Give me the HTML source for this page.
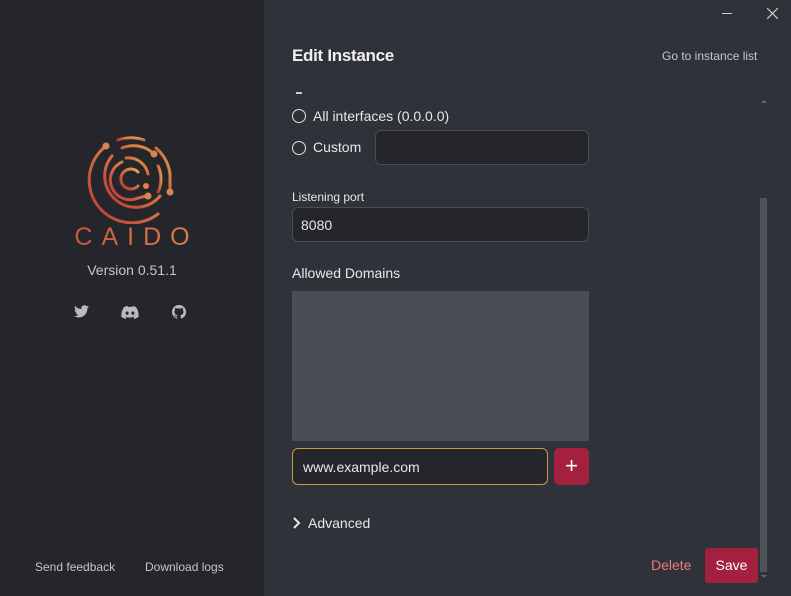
<!DOCTYPE html>
<html><head><style>
*{box-sizing:border-box;margin:0;padding:0}
body{width:791px;height:596px;overflow:hidden;background:#30323a;font-family:"Liberation Sans",sans-serif;position:relative;color:#e8e8ea}
.side{position:absolute;left:0;top:0;width:264px;height:596px;background:#25262b}
.abs{position:absolute}
.input{position:absolute;background:#25262c;border:1px solid #4a4c54;border-radius:6px}
.radio{position:absolute;width:14px;height:14px;border:1.5px solid #e0e0e0;border-radius:50%}
</style></head><body>
<div class="side">
<svg class="abs" style="left:82px;top:134px" width="96" height="90" viewBox="0 0 96 90">
<defs><linearGradient id="g" x1="0" y1="1" x2="1" y2="0"><stop offset="0" stop-color="#b8353a"/><stop offset="1" stop-color="#e8a24a"/></linearGradient></defs>
<g fill="none" stroke="url(#g)" stroke-width="3" stroke-linecap="round">
<path d="M24 12 A42 42 0 1 0 76 80"/>
<path d="M36 6 A42 42 0 0 1 62 6"/>
<path d="M74 14 A42 42 0 0 1 88 40 L88 56"/>
<path d="M30 22 A30 30 0 1 0 78 62"/>
<path d="M40 14 A30 30 0 0 1 72 20"/>
<path d="M76 32 A30 30 0 0 1 76 58"/>
<path d="M40 28 A19 19 0 1 0 56 64 L64 62"/>
<path d="M44 24 A20 20 0 0 1 66 40"/>
<path d="M56 38 A10 10 0 1 0 56 52"/>
<path d="M54 52 L62 52"/>
</g>
<g fill="#e0834a"><circle cx="24" cy="12" r="3.5"/><circle cx="72" cy="20" r="3.5"/><circle cx="88" cy="58" r="3.5"/><circle cx="66" cy="62" r="3.5"/><circle cx="64" cy="52" r="3"/></g>
</svg>
<div class="abs" style="left:0;width:264px;top:223px;text-align:center;font-size:25px;letter-spacing:9px;padding-left:9px;background:linear-gradient(90deg,#c0393c,#e09a4c);-webkit-background-clip:text;background-clip:text;-webkit-text-fill-color:transparent">CAIDO</div>
<div class="abs" style="left:0;width:264px;top:262px;text-align:center;font-size:14px;color:#c4c6cc">Version 0.51.1</div>
<svg class="abs" style="left:74px;top:305px" width="15" height="13" viewBox="0 0 24 20"><path fill="#b8bac0" d="M24 2.3a10 10 0 0 1-2.8.8A5 5 0 0 0 23.3.4a10 10 0 0 1-3.1 1.2A4.9 4.9 0 0 0 11.8 6 14 14 0 0 1 1.7.9a4.9 4.9 0 0 0 1.5 6.6A4.9 4.9 0 0 1 1 6.9a4.9 4.9 0 0 0 3.9 4.8 5 5 0 0 1-2.2.1 4.9 4.9 0 0 0 4.6 3.4A9.9 9.9 0 0 1 0 17.3 14 14 0 0 0 7.5 19.5c9 0 14-7.5 14-14v-.6A10 10 0 0 0 24 2.3z"/></svg>
<svg class="abs" style="left:121px;top:306px" width="18" height="13" viewBox="0 0 24 18"><path fill="#b8bac0" d="M20.3 1.5A19.8 19.8 0 0 0 15.4 0l-.6 1.3a18 18 0 0 0-5.5 0L8.6 0A19.7 19.7 0 0 0 3.7 1.5C.6 6.1-.3 10.6.1 15a20 20 0 0 0 6 3l1.3-2a13 13 0 0 1-2-1l.5-.4a14 14 0 0 0 12.2 0l.5.4a13 13 0 0 1-2 1l1.3 2a20 20 0 0 0 6-3c.5-5.1-.8-9.6-3.6-13.5zM8 12.3c-1.2 0-2.2-1.1-2.2-2.4S6.8 7.5 8 7.5s2.2 1.1 2.2 2.4-1 2.4-2.2 2.4zm8 0c-1.2 0-2.2-1.1-2.2-2.4s1-2.4 2.2-2.4 2.2 1.1 2.2 2.4-1 2.4-2.2 2.4z"/></svg>
<svg class="abs" style="left:172px;top:305px" width="14" height="14" viewBox="0 0 24 24"><path fill="#b8bac0" d="M12 0a12 12 0 0 0-3.8 23.4c.6.1.8-.3.8-.6v-2c-3.3.7-4-1.6-4-1.6-.6-1.4-1.4-1.8-1.4-1.8-1-.7.1-.7.1-.7 1.2.1 1.8 1.2 1.8 1.2 1 1.8 2.8 1.3 3.5 1 .1-.8.4-1.3.7-1.6-2.7-.3-5.5-1.3-5.5-6 0-1.2.5-2.3 1.3-3.1-.2-.4-.6-1.6.1-3.2 0 0 1-.3 3.3 1.2a11.5 11.5 0 0 1 6 0C17.3 4.7 18.3 5 18.3 5c.7 1.6.2 2.8.1 3.2.8.8 1.3 1.9 1.3 3.2 0 4.6-2.8 5.6-5.5 5.9.5.4.8 1.1.8 2.2v3.3c0 .3.2.7.8.6A12 12 0 0 0 12 0z"/></svg>
<div class="abs" style="left:35px;top:560px;font-size:12px;color:#c4c6cc">Send feedback</div>
<div class="abs" style="left:145px;top:560px;font-size:12px;color:#c4c6cc">Download logs</div>
</div>
<div class="abs" style="left:722px;top:13px;width:10px;height:1px;background:#ccc"></div>
<svg class="abs" style="left:767px;top:8px" width="11" height="11" viewBox="0 0 11 11"><path d="M0 0L11 11M11 0L0 11" stroke="#ccc" stroke-width="1.2"/></svg>
<div class="abs" style="left:292px;top:46px;font-size:17px;font-weight:bold;color:#f0f0f2;letter-spacing:-0.3px">Edit Instance</div>
<div class="abs" style="left:662px;top:49px;font-size:12px;color:#c4c6cc">Go to instance list</div>
<div class="abs" style="left:296px;top:92px;width:6px;height:1.5px;background:#ccc"></div>
<div class="abs" style="left:761px;top:100px;width:0;height:0;border-left:3px solid transparent;border-right:3px solid transparent;border-bottom:3px solid #666"></div>
<div class="radio" style="left:292px;top:109px"></div>
<div class="abs" style="left:313px;top:108px;font-size:14px">All interfaces (0.0.0.0)</div>
<div class="radio" style="left:292px;top:141px"></div>
<div class="abs" style="left:313px;top:139px;font-size:14px">Custom</div>
<div class="input" style="left:375px;top:130px;width:214px;height:35px"></div>
<div class="abs" style="left:292px;top:190px;font-size:12px">Listening port</div>
<div class="input" style="left:292px;top:207px;width:297px;height:35px;font-size:14px;padding:9px 8px">8080</div>
<div class="abs" style="left:292px;top:265px;font-size:14px">Allowed Domains</div>
<div class="abs" style="left:292px;top:291px;width:297px;height:150px;background:#4a4c56"></div>
<div class="input" style="left:292px;top:448px;width:256px;height:37px;border-color:#c99a4a;font-size:14px;padding:10px 10px">www.example.com</div>
<div class="abs" style="left:554px;top:448px;width:35px;height:37px;background:#a3203e;border-radius:5px;color:#fff;font-size:22px;text-align:center;line-height:35px">+</div>
<svg class="abs" style="left:292px;top:517px" width="10" height="12" viewBox="0 0 10 12"><path d="M2 1L7 6L2 11" stroke="#e8e8ea" stroke-width="2" fill="none"/></svg>
<div class="abs" style="left:308px;top:515px;font-size:14px">Advanced</div>
<div class="abs" style="left:651px;top:557px;font-size:14px;color:#e87a80">Delete</div>
<div class="abs" style="left:705px;top:548px;width:53px;height:35px;background:#a3203e;border-radius:3px;color:#fff;font-size:14px;text-align:center;line-height:35px">Save</div>
<div class="abs" style="left:760px;top:198px;width:7px;height:374px;background:#50525a"></div>
<div class="abs" style="left:761px;top:575px;width:0;height:0;border-left:3px solid transparent;border-right:3px solid transparent;border-top:3px solid #666"></div>
</body></html>
